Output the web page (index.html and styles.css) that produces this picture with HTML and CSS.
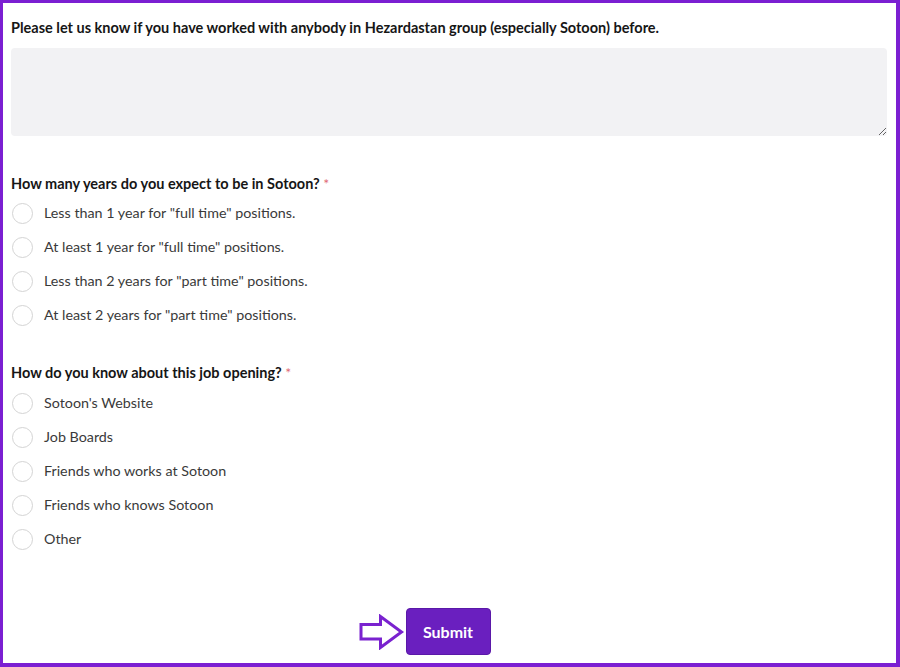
FILE: index.html
```html
<!DOCTYPE html>
<html>
<head>
<meta charset="utf-8">
<link rel="stylesheet" href="styles.css">
</head>
<body>
<div class="frame">
  <form class="form">
    <div class="field">
      <label class="question">Please let us know if you have worked with anybody in Hezardastan group (especially Sotoon) before.</label>
      <textarea class="textarea"></textarea>
    </div>

    <div class="field field-q2">
      <div class="question">How many years do you expect to be in Sotoon? <span class="req">*</span></div>
      <div class="options options-q2">
        <label class="option"><span class="radio"></span><span class="opt-text">Less than 1 year for "full time" positions.</span></label>
        <label class="option"><span class="radio"></span><span class="opt-text">At least 1 year for "full time" positions.</span></label>
        <label class="option"><span class="radio"></span><span class="opt-text">Less than 2 years for "part time" positions.</span></label>
        <label class="option"><span class="radio"></span><span class="opt-text">At least 2 years for "part time" positions.</span></label>
      </div>
    </div>

    <div class="field field-q3">
      <div class="question">How do you know about this job opening? <span class="req">*</span></div>
      <div class="options options-q3">
        <label class="option"><span class="radio"></span><span class="opt-text">Sotoon's Website</span></label>
        <label class="option"><span class="radio"></span><span class="opt-text">Job Boards</span></label>
        <label class="option"><span class="radio"></span><span class="opt-text">Friends who works at Sotoon</span></label>
        <label class="option"><span class="radio"></span><span class="opt-text">Friends who knows Sotoon</span></label>
        <label class="option"><span class="radio"></span><span class="opt-text">Other</span></label>
      </div>
    </div>

    <div class="actions">
      <div class="submit-wrap">
        <svg class="arrow" width="46" height="36" viewBox="0 0 46 36">
          <path d="M2 10.5 H21.5 V2.5 L42.5 18 L21.5 33.5 V25 H2 Z" fill="none" stroke="#7a22cf" stroke-width="3" stroke-linejoin="miter"/>
        </svg>
        <button type="button" class="submit">Submit</button>
      </div>
    </div>
  </form>
</div>
</body>
</html>
```
FILE: styles.css
```css
html, body {
  margin: 0;
  padding: 0;
  background: #ffffff;
}

.frame {
  box-sizing: border-box;
  width: 900px;
  height: 667px;
  border-style: solid;
  border-color: #7b1fd2;
  border-width: 3px 4px 4px 3px;
  background: #ffffff;
  overflow: hidden;
}

.form {
  padding: 15px 9px 0 8px;
  font-family: Lato, "Liberation Sans", sans-serif;
}

.field {
  display: flex;
  flex-direction: column;
}

.question {
  font-size: 14.5px;
  font-weight: 700;
  line-height: 20px;
  color: #161616;
}

.req {
  color: #e06a74;
  font-weight: 400;
  font-size: 14px;
}

.textarea {
  display: block;
  box-sizing: border-box;
  margin-top: 10px;
  width: 876px;
  height: 88px;
  border: none;
  border-radius: 4px;
  background: #f2f2f4;
  resize: vertical;
  padding: 8px;
  font-family: inherit;
  font-size: 15px;
}

.field-q2 {
  margin-top: 38px;
}

.field-q3 {
  margin-top: 31px;
}

.options {
  display: flex;
  flex-direction: column;
}

.options-q2 {
  margin-top: 2px;
}

.options-q3 {
  margin-top: 3px;
}

.option {
  display: flex;
  align-items: center;
  height: 34px;
  gap: 11px;
  padding-left: 1px;
}

.radio {
  box-sizing: border-box;
  width: 21px;
  height: 21px;
  border-radius: 50%;
  border: 1px solid #d4d4d4;
  background: #fff;
  flex: none;
}

.opt-text {
  font-size: 14.3px;
  color: #3a3a3a;
  line-height: 20px;
}

.actions {
  display: flex;
  justify-content: center;
  margin-top: 52px;
}

.submit-wrap {
  position: relative;
  margin-left: -2px;
}

.arrow {
  position: absolute;
  left: -47px;
  top: 6px;
}

.submit {
  display: block;
  width: 85px;
  height: 47px;
  border: 1px solid #5a18a8;
  border-radius: 4px;
  background: #6a1fbf;
  color: #ffffff;
  font-family: Lato, "Liberation Sans", sans-serif;
  font-size: 16px;
  font-weight: 700;
  padding: 0;
}
```
